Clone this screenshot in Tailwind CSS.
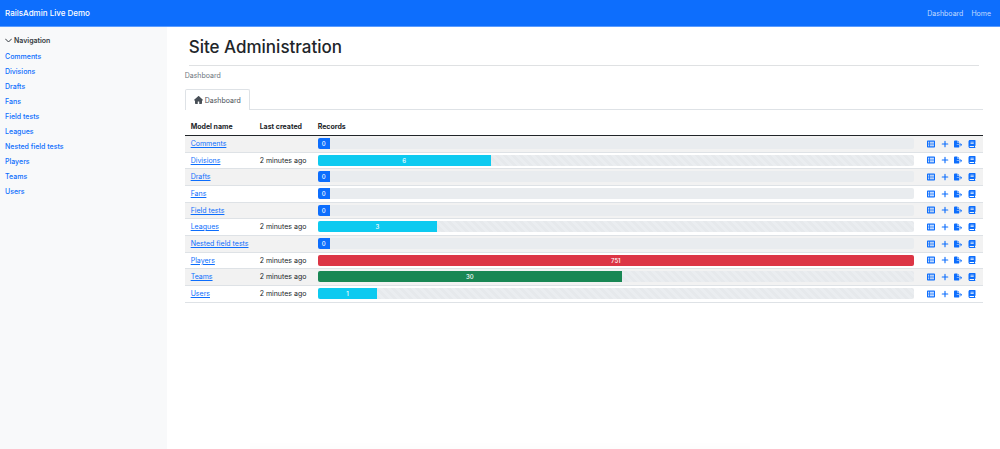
<!DOCTYPE html>
<html lang="en">
<head>
<meta charset="utf-8">
<meta name="viewport" content="width=device-width, initial-scale=1">
<title>Site Administration</title>
<script src="https://cdn.jsdelivr.net/npm/@tailwindcss/browser@4"></script>
</head>
<body class="flex min-h-screen flex-col bg-white font-['Inter','Liberation_Sans',sans-serif] text-[7px] leading-[11px] text-[#212529]">
<svg class="hidden" aria-hidden="true">
  <symbol id="list" viewBox="0 0 512 512"><path fill-rule="evenodd" d="M64 32C29 32 0 61 0 96v320c0 35 29 64 64 64h384c35 0 64-29 64-64V96c0-35-29-64-64-64H64zm0 80h76v70H64v-70zm124 0h260v70H188v-70zM64 222h76v68H64v-68zm124 0h260v68H188v-68zM64 330h76v70H64v-70zm124 0h260v70H188v-70z"/></symbol>
  <symbol id="plus" viewBox="0 0 448 512"><path d="M260 80c0-20-16-36-36-36s-36 16-36 36v140H48c-20 0-36 16-36 36s16 36 36 36h140v140c0 20 16 36 36 36s36-16 36-36V292h140c20 0 36-16 36-36s-16-36-36-36H260V80z"/></symbol>
  <symbol id="export" viewBox="0 0 576 512"><path d="M0 64C0 29 29 0 64 0h160v128c0 18 14 32 32 32h128v128H216c-13 0-24 11-24 24s11 24 24 24h168v112c0 35-29 64-64 64H64c-35 0-64-29-64-64V64zm384 272v-48h110l-39-39c-9-9-9-25 0-34s25-9 34 0l80 80c9 9 9 25 0 34l-80 80c-9 9-25 9-34 0s-9-25 0-34l39-39H384zm0-208H256V0l128 128z"/></symbol>
  <symbol id="book" viewBox="0 0 448 512"><path fill-rule="evenodd" d="M96 0C43 0 0 43 0 96v320c0 53 43 96 96 96h320c18 0 32-14 32-32s-14-32-32-32v-64c18 0 32-14 32-32V32c0-18-14-32-32-32H96zm0 384h256v64H96c-18 0-32-14-32-32s14-32 32-32zm32-272h208v40H128v-40zm0 80h208v40H128v-40z"/></symbol>
</svg>

<header class="flex h-[27px] items-center justify-between border-b border-[#5a9cff] bg-[#0d6efd] pr-[9px] pl-[5px]">
  <a href="#" class="text-[8px] font-medium text-white">RailsAdmin Live Demo</a>
  <nav class="flex gap-2 text-white/75"><a href="#">Dashboard</a><a href="#">Home</a></nav>
</header>

<div class="flex flex-1">
  <aside class="w-1/6 shrink-0 bg-[#f8f9fa] px-[5px] pt-2">
    <button type="button" class="flex items-center gap-0.5 font-semibold text-[#343a40]">
      <svg class="h-[7px] w-[7px]" viewBox="0 0 14 14" fill="none" stroke="currentColor" stroke-width="2" stroke-linecap="round" stroke-linejoin="round" aria-hidden="true"><path d="M1 4l6 6 6-6"/></svg>
      Navigation
    </button>
    <nav id="side" class="mt-[3px] flex flex-col items-start font-medium leading-[15px] text-[#0d6efd]"></nav>
  </aside>

  <main class="min-w-0 flex-1 pr-[17px] pl-[18px]">
    <h1 class="mr-1 ml-1 border-b border-[#dfe1e3] pt-[9px] pb-[7px] text-[17px] leading-[22px] font-medium">Site Administration</h1>
    <p class="mt-1 text-[#6c757d]">Dashboard</p>
    <div role="tablist" class="mt-2 flex border-b border-[#dee2e6]">
      <button type="button" role="tab" aria-selected="true" class="-mb-px flex h-[21px] items-center gap-0.5 rounded-t-xs border border-b-0 border-[#dee2e6] bg-white px-2 text-[#495057]">
        <svg class="h-2 w-[9px]" viewBox="0 0 576 512" fill="currentColor" aria-hidden="true"><path d="M576 256c0 18-15 32-32 32h-32v176c0 27-21 48-48 48H360c-13 0-24-11-24-24V376c0-13-11-24-24-24h-48c-13 0-24 11-24 24v112c0 13-11 24-24 24H112c-27 0-48-21-48-48V288H32c-18 0-32-14-32-32 0-9 3-17 10-24L266 8c7-7 15-8 22-8s15 2 21 7l256 225c8 7 12 15 11 24z"/></svg>
        Dashboard
      </button>
    </div>
    <table class="mt-2 w-full table-fixed border-collapse text-left">
      <colgroup><col class="w-[69px]"><col class="w-[58px]"><col><col class="w-[63px]"></colgroup>
      <thead>
        <tr class="h-[17px] border-b border-[#212529] font-semibold">
          <th scope="col" class="pl-1.5">Model name</th><th scope="col" class="pl-1.5">Last created</th><th scope="col" class="pl-1.5">Records</th><th scope="col" aria-label="Actions"></th>
        </tr>
      </thead>
      <tbody id="rows"></tbody>
    </table>
  </main>
</div>
<div aria-hidden="true" class="pointer-events-none fixed bottom-0 left-1/4 h-2 w-1/2 bg-linear-to-b from-transparent to-black/1"></div>

<script>
  const models = [
    ['Comments', 0, 2, 'bg-[#0d6efd]'],
    ['Divisions', 6, 29, 'bg-[#0dcaf0]'],
    ['Drafts', 0, 2, 'bg-[#0d6efd]'],
    ['Fans', 0, 2, 'bg-[#0d6efd]'],
    ['Field tests', 0, 2, 'bg-[#0d6efd]'],
    ['Leagues', 3, 20, 'bg-[#0dcaf0]'],
    ['Nested field tests', 0, 2, 'bg-[#0d6efd]'],
    ['Players', 751, 100, 'bg-[#dc3545]'],
    ['Teams', 30, 51, 'bg-[#198754]'],
    ['Users', 1, 10, 'bg-[#0dcaf0]'],
  ];
  const actions = [['list', 'List'], ['plus', 'Add new'], ['export', 'Export'], ['book', 'History']];
  const stripes = 'bg-[linear-gradient(45deg,#e6e9ec_25%,#eaedf0_25%,#eaedf0_50%,#e6e9ec_50%,#e6e9ec_75%,#eaedf0_75%)] bg-size-[8px_8px]';
  document.getElementById('side').innerHTML = models.map(([name]) => `<a href="#">${name}</a>`).join('');
  document.getElementById('rows').innerHTML = models.map(([name, count, pct, color]) => `
    <tr class="h-[17px] border-b border-[#dee2e6] odd:bg-[#f2f2f2] nth-[3n+2]:h-4">
      <td class="pl-1.5"><a href="#" class="text-[#0d6efd] underline">${name}</a></td>
      <td class="pl-1.5">${count ? '2 minutes ago' : ''}</td>
      <td class="px-1.5">
        <div class="flex h-[11px] overflow-hidden rounded-xs ${count ? stripes : 'bg-[#e9ecef]'}">
          <div class="flex items-center justify-center text-[6px] font-medium text-white ${color}" style="width:${pct}%">${count}</div>
        </div>
      </td>
      <td class="pr-[7px] pl-[7px]">
        <div class="flex items-center justify-between text-[#0d6efd]">
          ${actions.map(([icon, label]) => `<a href="#" aria-label="${label} ${name}"><svg class="h-2 w-2" fill="currentColor" aria-hidden="true"><use href="#${icon}"/></svg></a>`).join('')}
        </div>
      </td>
    </tr>`).join('');
</script>
</body>
</html>
